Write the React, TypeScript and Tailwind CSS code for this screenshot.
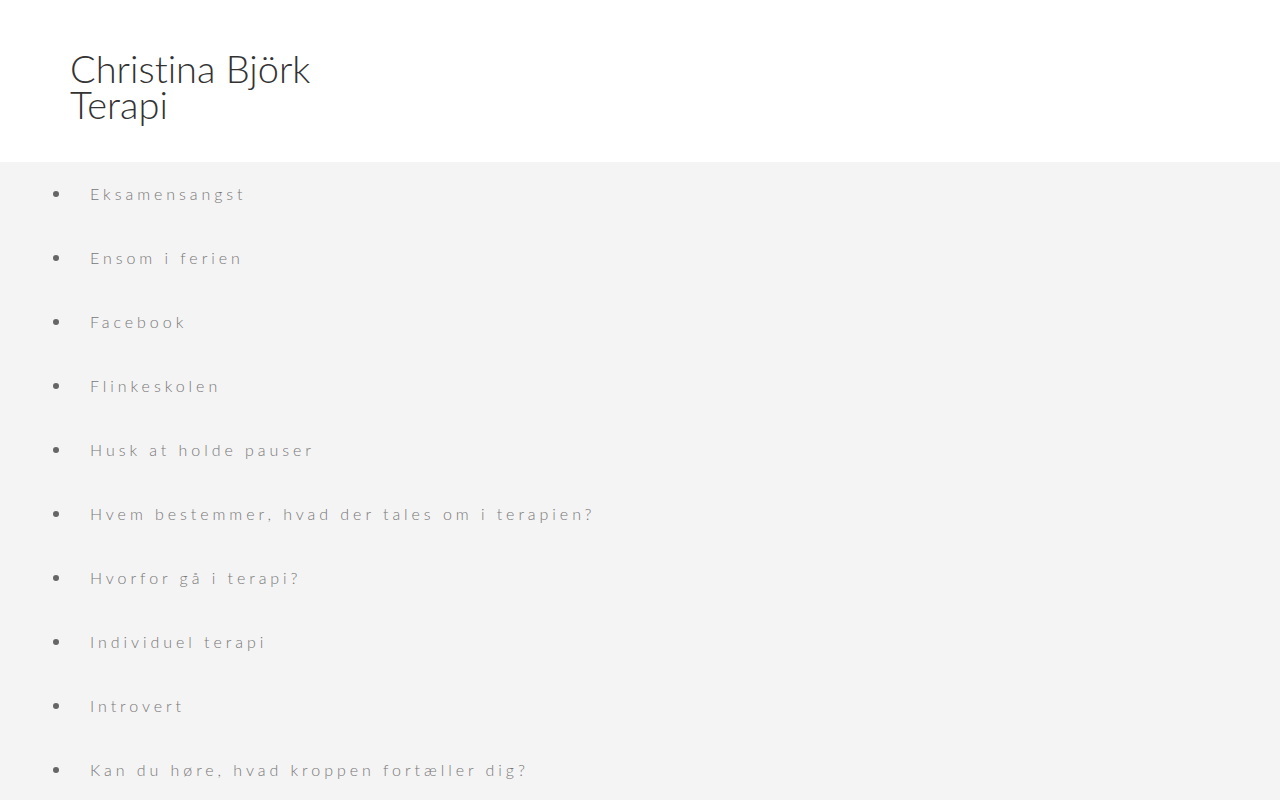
import React from "react";

const items = [
  "Eksamensangst",
  "Ensom i ferien",
  "Facebook",
  "Flinkeskolen",
  "Husk at holde pauser",
  "Hvem bestemmer, hvad der tales om i terapien?",
  "Hvorfor gå i terapi?",
  "Individuel terapi",
  "Introvert",
  "Kan du høre, hvad kroppen fortæller dig?",
];

export default function App() {
  return (
    <div className="min-h-screen bg-[#f4f4f4]" style={{ fontFamily: "Lato, 'Open Sans', sans-serif" }}>
      <header className="h-[162px] bg-white pl-[70px] pt-[50px]">
        <h1 className="text-[38px] leading-[36px] text-[#333] font-light [font-variant-ligatures:none]">
          <span className="block">Christina Björk</span>
          <span className="block">Terapi</span>
        </h1>
      </header>
      <ul className="m-0 p-0">
        {items.map((t) => (
          <li key={t} className="flex items-center h-[64px]">
            <span className="ml-[53px] w-[6px] h-[6px] rounded-full bg-[#666]" />
            <span className="ml-[31px] text-[16px] tracking-[3.95px] text-[#777] font-light">{t}</span>
          </li>
        ))}
      </ul>
    </div>
  );
}
